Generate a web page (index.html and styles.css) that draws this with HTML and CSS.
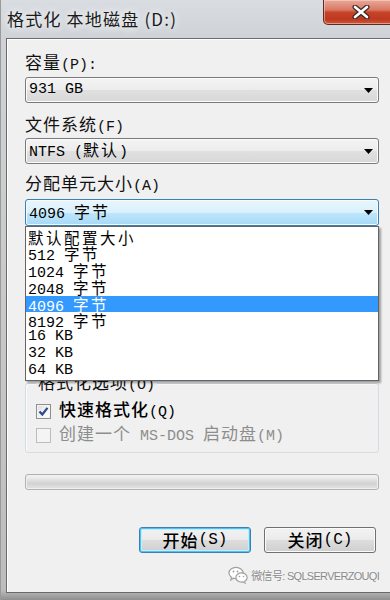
FILE: index.html
```html
<!DOCTYPE html>
<html lang="zh-CN">
<head>
<meta charset="utf-8">
<title>格式化 本地磁盘 (D:)</title>
<link rel="stylesheet" href="styles.css">
</head>
<body>
<div class="window">
  <div class="titlebar">
    <span class="title">格式化 本地磁盘 (D:)</span>
    <div class="close">
      <svg width="20" height="14" viewBox="0 0 20 14"><path d="M4 2 L16 12 M16 2 L4 12" stroke="#3a2a28" stroke-width="5" stroke-linecap="round"/><path d="M4 2 L16 12 M16 2 L4 12" stroke="#ffffff" stroke-width="2.6" stroke-linecap="round"/></svg>
    </div>
  </div>
  <div class="client">
    <div class="lbl"><span class="cnl">容量</span><span class="acc">(P):</span></div>
    <div class="combo"><span class="val">931 GB</span><svg class="arrow" width="9" height="5" viewBox="0 0 9 5"><path d="M0 0H9L4.5 5Z"/></svg></div>

    <div class="lbl lbl2"><span class="cnl">文件系统</span><span class="acc">(F)</span></div>
    <div class="combo combo2"><span class="val">NTFS (<span class="cn">默认</span>)</span><svg class="arrow" width="9" height="5" viewBox="0 0 9 5"><path d="M0 0H9L4.5 5Z"/></svg></div>

    <div class="lbl lbl3"><span class="cnl">分配单元大小</span><span class="acc">(A)</span></div>
    <div class="combo-wrap">
      <div class="combo focus"><span class="val">4096 <span class="cn">字节</span></span><svg class="arrow" width="9" height="5" viewBox="0 0 9 5"><path d="M0 0H9L4.5 5Z"/></svg></div>
      <ul class="list">
        <li><span class="cn">默认配置大小</span></li>
        <li>512 <span class="cn">字节</span></li>
        <li>1024 <span class="cn">字节</span></li>
        <li>2048 <span class="cn">字节</span></li>
        <li class="sel">4096 <span class="cn">字节</span></li>
        <li>8192 <span class="cn">字节</span></li>
        <li>16 KB</li>
        <li>32 KB</li>
        <li>64 KB</li>
      </ul>
    </div>

    <div class="group">
      <div class="legend"><span class="cnl">格式化选项</span><span class="acc">(O)</span></div>
      <div class="cb-row">
        <span class="cb checked"><svg width="11" height="11" viewBox="0 0 11 11"><path d="M1.5 5.5 L4.3 8.5 L9.5 1.8" fill="none" stroke="#2b4a8c" stroke-width="2.2"/></svg></span>
        <span class="cb-text strong"><span class="cnl">快速格式化</span><span class="acc">(Q)</span></span>
      </div>
      <div class="cb-row disabled">
        <span class="cb"></span>
        <span class="cb-text"><span class="cnl">创建一个</span><span class="acc"> MS-DOS </span><span class="cnl">启动盘</span><span class="acc">(M)</span></span>
      </div>
    </div>

    <div class="progress"></div>

    <div class="buttons">
      <button class="btn default"><span class="cnl">开始</span><span class="bacc">(S)</span></button>
      <button class="btn"><span class="cnl">关闭</span><span class="bacc">(C)</span></button>
    </div>

    <div class="watermark">
      <svg width="20" height="18" viewBox="0 0 20 18">
        <ellipse cx="8" cy="7" rx="7" ry="5.6" fill="#fff" stroke="#a0a0a0" stroke-width="1.2"/>
        <path d="M3.5 11 L2.8 14 L6 12" fill="#fff" stroke="#a0a0a0" stroke-width="1.1"/>
        <ellipse cx="13.5" cy="11.5" rx="5.6" ry="4.6" fill="#fff" stroke="#a0a0a0" stroke-width="1.2"/>
        <path d="M16.5 15.5 L17.5 17.5 L14.5 16" fill="#fff" stroke="#a0a0a0" stroke-width="1"/>
        <circle cx="5.5" cy="5.5" r="0.9" fill="#a0a0a0"/>
        <circle cx="9.5" cy="5.5" r="0.9" fill="#a0a0a0"/>
        <circle cx="11.5" cy="10.5" r="0.8" fill="#a0a0a0"/>
        <circle cx="15.5" cy="10.5" r="0.8" fill="#a0a0a0"/>
      </svg>
      <span class="wm-text">微信号: SQLSERVERZOUQI</span>
    </div>
  </div>
</div>
</body>
</html>
```

FILE: styles.css
```css
html, body {
  margin: 0;
  padding: 0;
}

body {
  width: 390px;
  height: 600px;
  overflow: hidden;
  font-family: "Noto Sans CJK SC", sans-serif;
  color: #111;
}

.window {
  box-sizing: border-box;
  height: 600px;
  display: flex;
  flex-direction: column;
  border-left: 1px solid #9a9a9a;
  background: linear-gradient(to bottom, #d9dde1 0px, #cfd3d7 38px, #c9c9c9 300px, #bdbdbd 590px, #8f8f8f 600px);
}

/* title bar */
.titlebar {
  height: 38px;
  flex-shrink: 0;
  display: flex;
  align-items: flex-start;
}

.title {
  margin: 7px 0 0 6px;
  font-size: 17px;
  line-height: 24px;
  letter-spacing: 1.2px;
  color: #1a1a1a;
  text-shadow: 0 0 6px #f4f6f8, 0 0 10px #f4f6f8;
  white-space: nowrap;
}

.close {
  box-sizing: border-box;
  margin-left: auto;
  margin-right: -9px;
  width: 76px;
  height: 25px;
  flex-shrink: 0;
  border: 1px solid #5c2c24;
  border-top: 0;
  border-radius: 0 0 5px 5px;
  background: linear-gradient(to bottom, #e8a898 0%, #da7a66 40%, #c6432a 52%, #bd381f 80%, #cf5a3b 100%);
  box-shadow: inset 0 0 0 1px rgba(255, 220, 210, 0.5);
  display: flex;
  align-items: center;
  justify-content: center;
}

/* client area */
.client {
  flex: 1;
  margin: 0 0 7px 5px;
  border: 1px solid #6a6a6a;
  border-right: 0;
  box-shadow: inset 1px 1px 0 #ffffff;
  background: #f0f0f0;
  padding: 13px 11px 0 18px;
  display: flex;
  flex-direction: column;
}

.lbl {
  height: 20px;
  line-height: 20px;
  white-space: nowrap;
}

.cnl {
  font-family: "Noto Sans CJK SC", sans-serif;
  font-size: 17px;
  letter-spacing: 1px;
}

.acc {
  font-family: "Liberation Mono", monospace;
  font-size: 15px;
  white-space: pre;
}

.lbl2 { margin-top: 11px; }
.lbl3 { margin-top: 9px; }

/* combo boxes */
.combo {
  box-sizing: border-box;
  margin-top: 5px;
  height: 26px;
  border: 1px solid #7a7a7a;
  border-radius: 3px;
  background: linear-gradient(to bottom, #f4f4f4 0%, #ececec 50%, #e0e0e0 51%, #d8d8d8 100%);
  box-shadow: inset 0 0 0 1px #fbfbfb;
  display: flex;
  align-items: center;
  justify-content: space-between;
  padding: 0 5px 0 3px;
}

.combo2 { margin-top: 4px; }

.combo-wrap {
  position: relative;
  margin-top: 6px;
  z-index: 5;
}

.combo.focus {
  margin-top: 0;
  height: 27px;
  border-color: #3c7fb1;
  background: linear-gradient(to bottom, #eaf6fd 0%, #d9f0fc 50%, #bee6fd 51%, #a7d9f5 100%);
  box-shadow: inset 0 0 0 1px #f4fbff;
}

.val {
  font-family: "Liberation Mono", monospace;
  font-size: 15px;
  line-height: 20px;
  white-space: pre;
  color: #000;
}

.cn {
  font-family: "Noto Sans CJK SC", sans-serif;
  font-size: 16px;
  letter-spacing: 2px;
}

.arrow {
  fill: #000;
  display: block;
}

/* dropdown list */
.list {
  position: absolute;
  left: 0;
  top: 100%;
  width: 354px;
  box-sizing: border-box;
  margin: 0;
  padding: 1.5px 0 0 0;
  list-style: none;
  background: #ffffff;
  border: 1px solid #646464;
  box-shadow: 2px 2px 2px rgba(0, 0, 0, 0.35);
}

.list li {
  height: 16.8px;
  line-height: 16.8px;
  padding-left: 2px;
  font-family: "Liberation Mono", monospace;
  font-size: 15px;
  white-space: pre;
  color: #000;
  overflow: visible;
}

.list li .cn {
  font-size: 15.5px;
  letter-spacing: 2.5px;
  line-height: 16.8px;
}

.list li.sel {
  background: #3399ff;
  color: #ffffff;
}

/* group box */
.group {
  margin-top: 157px;
  border: 1px solid #d3dde3;
  border-radius: 3px;
  box-shadow: inset 1px 1px 0 #fbfcfd;
  padding: 0 10px 8px 10px;
  display: flex;
  flex-direction: column;
  align-items: flex-start;
}

.legend {
  margin-top: -12px;
  height: 20px;
  line-height: 20px;
  padding: 0 2px;
  background: #f0f0f0;
  white-space: nowrap;
}

.cb-row {
  display: flex;
  align-items: center;
  height: 18px;
  margin-top: 10px;
  gap: 8px;
  white-space: nowrap;
}

.cb-row + .cb-row { margin-top: 6px; }

.cb {
  box-sizing: border-box;
  width: 15px;
  height: 15px;
  border: 1px solid #8e8f8f;
  background: linear-gradient(135deg, #dcdcdc 0%, #f6f6f6 60%, #ffffff 100%);
  box-shadow: inset 0 0 0 1px #f4f4f4;
  display: flex;
  align-items: center;
  justify-content: center;
  flex-shrink: 0;
}

.cb-text {
  line-height: 18px;
  color: #000;
}

.cb-text.strong .cnl {
  font-weight: 500;
}

.disabled .cb {
  border-color: #bcbcbc;
  background: #f4f4f4;
}

.disabled .cb-text {
  color: #8d8d8d;
}

/* progress */
.progress {
  box-sizing: border-box;
  margin-top: 21px;
  height: 16px;
  border: 1px solid #b2b2b2;
  border-radius: 3px;
  background: linear-gradient(to bottom, #f6f6f6 0%, #e2e2e2 35%, #d2d2d2 60%, #e4e4e4 100%);
  box-shadow: inset 0 0 0 1px #efefef;
}

/* buttons */
.buttons {
  margin-top: 37px;
  display: flex;
  justify-content: flex-end;
  gap: 13px;
  padding-right: 3px;
}

.btn {
  box-sizing: border-box;
  width: 112px;
  height: 26px;
  margin: 0;
  padding: 0;
  border: 1px solid #707070;
  border-radius: 3px;
  background: linear-gradient(to bottom, #f2f2f2 0%, #ebebeb 50%, #dddddd 51%, #cfcfcf 100%);
  box-shadow: inset 0 0 0 1px #fbfbfb;
  color: #000;
  line-height: 22px;
  white-space: nowrap;
  display: flex;
  align-items: center;
  justify-content: center;
}

.btn .cnl {
  font-weight: 500;
}

.btn.default {
  border-color: #3c7fb1;
  box-shadow: inset 0 0 0 1px #48c5f2, inset 0 0 0 2px #c4ecfb;
}

.bacc {
  font-family: "Liberation Mono", monospace;
  font-size: 16px;
}

/* watermark */
.watermark {
  margin-top: 11px;
  height: 22px;
  display: flex;
  align-items: center;
  justify-content: flex-end;
  gap: 3px;
}

.wm-text {
  font-family: "Liberation Sans", "Noto Sans CJK SC", sans-serif;
  font-size: 11px;
  letter-spacing: -0.7px;
  color: #8a8a8a;
  text-shadow: 0 0 2px #ffffff;
  white-space: nowrap;
}
```
